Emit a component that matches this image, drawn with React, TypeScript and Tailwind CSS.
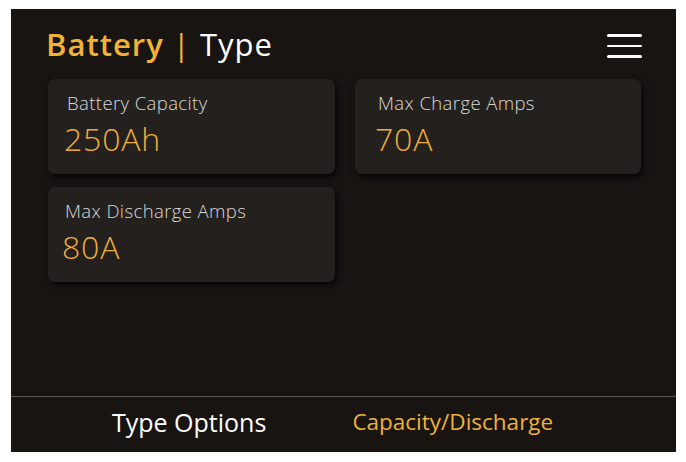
import React from "react";

const CARDS = [
  { id: 1, label: "Battery Capacity", value: "250Ah", pad: "pl-[19px]" },
  { id: 2, label: "Max Charge Amps", value: "70A", pad: "pl-[23px]" },
  { id: 3, label: "Max Discharge Amps", value: "80A", pad: "pl-[17px]" },
];

const StatCard = ({ label, value, pad }: { label: string; value: string; pad: string }) => (
  <div
    className={`h-[95px] rounded-[7px] bg-[#24201d] ${pad} pt-[12px] shadow-[2px_3px_6px_rgba(0,0,0,0.8)]`}
  >
    <div className="text-[18.5px] leading-[24px] tracking-[0.4px] font-light text-[#dad8d6]">{label}</div>
    <div className="mt-1 -ml-[3px] text-[32px] leading-[40px] tracking-[0.8px] font-light text-[#eeac3c]">
      {value}
    </div>
  </div>
);

const App = () => (
  <div
    className="w-[686px] h-[462px] bg-white pl-[11px] pt-[9px]"
    style={{ fontFamily: '"Open Sans", "Noto Sans", sans-serif' }}
  >
    <div className="w-[665px] h-[443px] bg-[#181412] flex flex-col">
      <header className="h-[70px] flex items-center justify-between pl-[35px] pr-[34px]">
        <h1 className="text-[31px] leading-[40px] tracking-[1px] text-white">
          <span className="font-semibold text-[#f2b233]">Battery</span>
          <span className="text-[#f2b233]"> | </span>
          <span>Type</span>
        </h1>
        <button className="mt-[4px] flex flex-col gap-[8px]">
          <span className="block w-[35px] h-[2.5px] bg-white rounded-full" />
          <span className="block w-[35px] h-[2.5px] bg-white rounded-full" />
          <span className="block w-[35px] h-[2.5px] bg-white rounded-full" />
        </button>
      </header>

      <div className="flex-1 pl-[37px] pr-[35px]">
        <div className="grid grid-cols-[287px_286px] gap-x-[20px] gap-y-[13px]">
          {CARDS.map((c) => (
            <StatCard key={c.id} label={c.label} value={c.value} pad={c.pad} />
          ))}
        </div>
      </div>

      <footer className="h-[56px] border-t-[1.5px] border-[#5a5856] flex items-start pt-[9px] pl-[101px]">
        <span className="text-[25px] leading-[32px] text-white">Type Options</span>
        <span className="ml-[86px] text-[22.5px] leading-[32px] text-[#eeb13a]">Capacity/Discharge</span>
      </footer>
    </div>
  </div>
);

export default App;
